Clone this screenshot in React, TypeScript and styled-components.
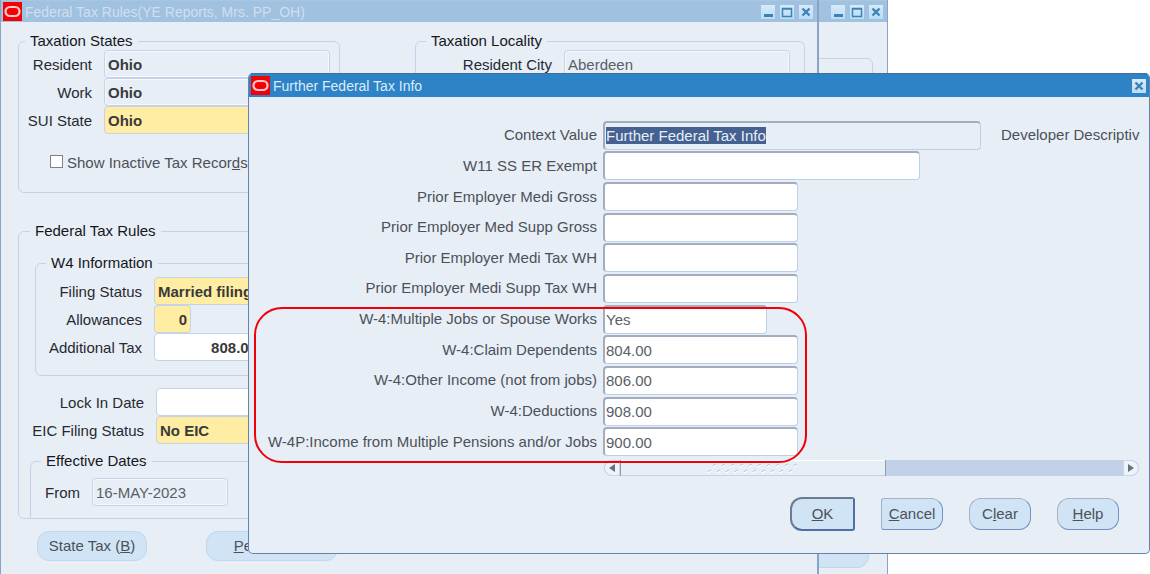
import React, { useEffect, useRef } from "react";
import styled, { createGlobalStyle, css } from "styled-components";

const GlobalStyle = createGlobalStyle`
  *, *::before, *::after { box-sizing: border-box; }
  body {
    margin: 0;
    background: #ffffff;
    font-family: "Liberation Sans", Arial, sans-serif;
    font-size: 15px;
    line-height: 18px;
    color: #262a30;
  }
  button, input { font: inherit; color: inherit; }
`;

const colors = {
  canvas: "#e8eef6",
  line: "#c5d3e6",
  edge: "#8aa2c6",
  required: "#ffeda3",
  button: "#d1e4f5",
  inactiveBar: "#a0c1df",
  activeBar: "#2d83c5",
};

const Desktop = styled.main`
  position: relative;
  min-height: 100vh;
  overflow: hidden;
`;

const Window = styled.section<{ $width: number; $edge: number }>`
  position: absolute;
  top: 0;
  bottom: 0;
  left: 0;
  width: ${(p) => p.$width}px;
  display: flex;
  flex-direction: column;
  background: ${colors.canvas};
  border: solid ${colors.edge};
  border-width: 0 ${(p) => p.$edge}px 0 1px;
`;

const TitleBar = styled.header<{ $active?: boolean }>`
  display: flex;
  align-items: center;
  flex: none;
  gap: 3px;
  height: ${(p) => (p.$active ? 24 : 22)}px;
  padding: 0 ${(p) => (p.$active ? 3 : 4)}px 0 2px;
  background: ${(p) => (p.$active ? colors.activeBar : colors.inactiveBar)};
  border-top: 1px solid ${(p) => (p.$active ? "#3f6f9c" : "#a9c6e0")};
  color: ${(p) => (p.$active ? "#dcebf8" : "#cfdff0")};
`;

const Title = styled.h1`
  flex: 1;
  margin: 0;
  font-size: 14px;
  font-weight: 400;
  white-space: nowrap;
`;

const WindowControls = styled.div`
  display: flex;
  gap: 5px;
  margin-left: auto;
`;

const WindowButton = styled.button`
  display: flex;
  width: 14px;
  height: 14px;
  padding: 0;
  border: 0;
  background: linear-gradient(#d8eafa, #b9dcf4);
  color: #3b82b8;
`;

const Groups = styled.div`
  display: flex;
  flex-direction: column;
  gap: 29px;
  padding: 10px 12px 0 17px;
`;

const GroupRow = styled.div`
  display: grid;
  grid-template-columns: 322px 1fr;
  gap: 75px;
`;

const Group = styled.fieldset<{ $indent: number }>`
  min-width: 0;
  margin: 0;
  padding: 0;
  border: 1px solid ${colors.line};
  border-radius: 6px;

  > legend {
    margin-left: ${(p) => p.$indent}px;
    padding: 0 5px;
    color: #14171c;
  }
`;

const RulesGroup = styled(Group)`
  padding: 14px 12px 0 11px;
`;

const W4Group = styled(Group)`
  margin-left: 5px;
  padding: 5px 0 14px;
`;

const DatesGroup = styled(Group)`
  margin-top: 8px;
  padding: 8px 0 12px;
  border-bottom: 0;
  border-radius: 6px 6px 0 0;
`;

const FieldGrid = styled.div<{ $label: number }>`
  display: grid;
  grid-template-columns: ${(p) => p.$label}px 1fr;
  grid-auto-rows: 28px;
  column-gap: 12px;
  align-items: center;

  > label {
    padding-top: 2px;
    text-align: right;
    white-space: nowrap;
  }
`;

const Field = styled.input<{ $width: number; $tone?: "plain" | "required" | "locked"; $bold?: boolean; $right?: boolean }>`
  width: ${(p) => p.$width}px;
  height: 28px;
  padding: 0 3px;
  border: 1px solid ${colors.line};
  border-radius: 4px;
  outline: 0;
  background: ${(p) =>
    p.$tone === "required" ? colors.required : p.$tone === "locked" ? colors.canvas : "#ffffff"};
  box-shadow: ${(p) => (p.$tone === "locked" ? "inset 0 0 0 1px #f5f8fc" : "none")};
  color: ${(p) => (p.$bold ? "#3b3a3a" : "#5a5e66")};
  font-weight: ${(p) => (p.$bold ? 700 : 400)};
  text-align: ${(p) => (p.$right ? "right" : "left")};
`;

const CheckLabel = styled.label`
  display: flex;
  align-items: center;
  gap: 4px;
  height: 24px;
  margin: 17px 0 17px 31px;
  color: #4c5159;
  white-space: nowrap;

  input {
    appearance: none;
    width: 13px;
    height: 13px;
    margin: 0 0 4px;
    border: 1px solid #7d828c;
    background: #ffffff;
  }
`;

const RuleDates = styled.div`
  padding-top: 12px;
`;

const ButtonBar = styled.div`
  display: flex;
  gap: 59px;
  padding: 12px 19px;
  margin-left: 17px;
`;

const SoftButton = styled.button<{ $width: number }>`
  width: ${(p) => p.$width}px;
  height: 30px;
  padding: 0;
  border: 1px solid #bfd6ec;
  border-radius: 12px;
  background: ${colors.button};
  color: #4c5159;
`;

const BackBody = styled.div`
  flex: 1;
  display: flex;
  flex-direction: column;
  gap: 20px;
  padding: 36px 14px 6px 17px;
`;

const BackPanel = styled.div`
  flex: 1;
  border: 1px solid ${colors.line};
  border-radius: 6px;
`;

const BackActions = styled.div`
  display: flex;
  justify-content: flex-end;
  padding-right: 4px;
`;

const Dialog = styled.section`
  position: absolute;
  top: 73px;
  left: 248px;
  right: 0;
  display: flex;
  flex-direction: column;
  overflow: hidden;
  background: ${colors.canvas};
  border: 1px solid #6583ac;
  border-top: 0;
  border-radius: 5px;
`;

const DialogForm = styled.form`
  display: flex;
  flex-direction: column;
  padding: 23px 10px 22px 0;
`;

const Segments = styled.div`
  position: relative;
  display: grid;
  grid-template-rows: repeat(11, 1fr);
  min-height: 337px;
`;

const SegmentRow = styled.div`
  display: grid;
  grid-template-columns: 348px 1fr;
  column-gap: 6px;
  align-items: center;
  white-space: nowrap;
  color: #4c5159;

  > label { text-align: right; }
`;

const SegmentField = styled(Field)`
  height: 29px;
  padding: 0 1px;
  border-color: #a3adbd #bcd0e8 #bcd0e8 #a3adbd;
  border-width: 2px 1px 1px 2px;
  box-shadow: none;

  &::selection {
    background: #45618f;
    color: #e6eefa;
  }
`;

const ContextValue = styled.div`
  display: flex;
  align-items: center;
  gap: 20px;
`;

const Highlight = styled.div`
  position: absolute;
  top: 187px;
  left: 5px;
  width: 553px;
  height: 156px;
  border: 2px solid #f00008;
  border-radius: 28px;
  pointer-events: none;
`;

const ScrollBar = styled.div`
  display: grid;
  grid-template-columns: 16px 266px 1fr 16px;
  height: 16px;
  margin: 3px 0 0 355px;
  background: #c0d1e8;
  border-radius: 8px;
`;

const ScrollArrow = styled.button<{ $end?: boolean }>`
  display: flex;
  align-items: center;
  justify-content: center;
  padding: 0;
  border: 1px solid #cbd6e4;
  border-radius: ${(p) => (p.$end ? "0 8px 8px 0" : "8px 0 0 8px")};
  background: #eef3f9;
  color: #66707e;
`;

const Thumb = styled.div`
  display: flex;
  align-items: center;
  justify-content: center;
  border: solid #8d9cb3;
  border-width: 0 1px;
  background: ${colors.canvas};
  box-shadow: inset 0 1px 0 #ffffff, inset 0 -1px 0 #c5d3e6;
`;

const DialogActions = styled.div`
  display: flex;
  justify-content: flex-end;
  align-items: center;
  gap: 26px;
  height: 34px;
  margin: 21px 20px 0 0;
`;

const ActionButton = styled.button<{ $shape?: "default" | "left-square" }>`
  width: 62px;
  height: 32px;
  padding: 0;
  border: 1px solid;
  border-color: #a3b2c6 #7290bd #7290bd #a3b2c6;
  border-radius: ${(p) => (p.$shape === "left-square" ? "3px 12px 12px 3px" : "12px")};
  background: ${colors.button};
  color: #4c5159;

  ${(p) =>
    p.$shape === "default" &&
    css`
      width: 65px;
      height: 34px;
      border: 2px solid;
      border-color: #6a7b94 #4d6fa3 #4d6fa3 #6a7b94;
      border-radius: 12px 3px 3px 12px;
    `}
`;

const Logo = () => (
  <svg width="19" height="19" viewBox="0 0 19 19" aria-hidden="true">
    <rect width="19" height="19" fill="#f60008" />
    <rect x="2.5" y="5" width="14" height="9" rx="4.5" fill="none" stroke="#ffc9c9" strokeWidth="2.2" />
  </svg>
);

const glyphs = {
  Minimize: <path d="M3 10.5h9" strokeWidth="3" />,
  Maximize: <path d="M2.5 3.5h9v8h-9zM2.5 4h9" strokeWidth="1.5" />,
  Close: <path d="M3.5 3.5l7 7M10.5 3.5l-7 7" strokeWidth="2.4" />,
};

const Controls = ({ names }: { names: (keyof typeof glyphs)[] }) => (
  <WindowControls>
    {names.map((name) => (
      <WindowButton key={name} type="button" aria-label={name}>
        <svg width="14" height="14" viewBox="0 0 14 14" fill="none" stroke="currentColor">
          {glyphs[name]}
        </svg>
      </WindowButton>
    ))}
  </WindowControls>
);

const Grip = () => (
  <svg width="92" height="12" viewBox="0 0 92 12" fill="none" strokeWidth="1.4" aria-hidden="true">
    {Array.from({ length: 10 }, (_, i) => (
      <g key={i}>
        <path d={`M${i * 9 + 6} 4l3-2M${i * 9 + 1} 10l3-2`} stroke="#b0bccc" />
        <path d={`M${i * 9 + 6} 5l3-2M${i * 9 + 1} 11l3-2`} stroke="#ffffff" />
      </g>
    ))}
  </svg>
);

const segments = [
  { id: "w11", label: "W11 SS ER Exempt", value: "", width: 317 },
  { id: "medi-gross", label: "Prior Employer Medi Gross", value: "", width: 195 },
  { id: "supp-gross", label: "Prior Employer Med Supp Gross", value: "", width: 195 },
  { id: "medi-wh", label: "Prior Employer Medi Tax WH", value: "", width: 195 },
  { id: "supp-wh", label: "Prior Employer Medi Supp Tax WH", value: "", width: 195 },
  { id: "jobs", label: "W-4:Multiple Jobs or Spouse Works", value: "Yes", width: 164 },
  { id: "dependents", label: "W-4:Claim Dependents", value: "804.00", width: 195 },
  { id: "other", label: "W-4:Other Income (not from jobs)", value: "806.00", width: 195 },
  { id: "deductions", label: "W-4:Deductions", value: "908.00", width: 195 },
  { id: "pensions", label: "W-4P:Income from Multiple Pensions and/or Jobs", value: "900.00", width: 195 },
];

const FurtherInfoDialog = () => {
  const context = useRef<HTMLInputElement>(null);

  useEffect(() => {
    context.current?.focus();
    context.current?.select();
  }, []);

  return (
    <Dialog role="dialog" aria-label="Further Federal Tax Info">
      <TitleBar $active>
        <Logo />
        <Title>Further Federal Tax Info</Title>
        <Controls names={["Close"]} />
      </TitleBar>
      <DialogForm onSubmit={(e) => e.preventDefault()}>
        <Segments>
          <SegmentRow>
            <label htmlFor="context">Context Value</label>
            <ContextValue>
              <SegmentField ref={context} id="context" $width={378} $tone="locked" readOnly defaultValue="Further Federal Tax Info" />
              <span>Developer Descriptiv</span>
            </ContextValue>
          </SegmentRow>
          {segments.map((s) => (
            <SegmentRow key={s.id}>
              <label htmlFor={s.id}>{s.label}</label>
              <SegmentField id={s.id} $width={s.width} defaultValue={s.value} />
            </SegmentRow>
          ))}
          <Highlight />
        </Segments>
        <ScrollBar>
          <ScrollArrow type="button" aria-label="Scroll left">
            <svg width="6" height="8" viewBox="0 0 6 8"><path d="M6 0v8L0 4z" fill="currentColor" /></svg>
          </ScrollArrow>
          <Thumb><Grip /></Thumb>
          <span />
          <ScrollArrow type="button" aria-label="Scroll right" $end>
            <svg width="6" height="8" viewBox="0 0 6 8"><path d="M0 0v8l6-4z" fill="currentColor" /></svg>
          </ScrollArrow>
        </ScrollBar>
        <DialogActions>
          <ActionButton $shape="default"><u>O</u>K</ActionButton>
          <ActionButton type="button" $shape="left-square"><u>C</u>ancel</ActionButton>
          <ActionButton type="button">C<u>l</u>ear</ActionButton>
          <ActionButton type="button"><u>H</u>elp</ActionButton>
        </DialogActions>
      </DialogForm>
    </Dialog>
  );
};

export default function App() {
  return (
    <Desktop>
      <GlobalStyle />

      <Window $width={888} $edge={1}>
        <TitleBar>
          <Controls names={["Minimize", "Maximize", "Close"]} />
        </TitleBar>
        <BackBody>
          <BackPanel />
          <BackActions>
            <SoftButton $width={110} type="button" aria-label="Close form" />
          </BackActions>
        </BackBody>
      </Window>

      <Window $width={819} $edge={2}>
        <TitleBar>
          <Logo />
          <Title>Federal Tax Rules(YE Reports, Mrs. PP_OH)</Title>
          <Controls names={["Minimize", "Maximize", "Close"]} />
        </TitleBar>
        <Groups>
          <GroupRow>
            <Group $indent={6}>
              <legend>Taxation States</legend>
              <FieldGrid $label={73}>
                <label htmlFor="resident">Resident</label>
                <Field id="resident" $width={226} $tone="locked" $bold readOnly defaultValue="Ohio" />
                <label htmlFor="work">Work</label>
                <Field id="work" $width={226} $tone="locked" $bold readOnly defaultValue="Ohio" />
                <label htmlFor="sui">SUI State</label>
                <Field id="sui" $width={226} $tone="required" $bold defaultValue="Ohio" />
              </FieldGrid>
              <CheckLabel>
                <input type="checkbox" />
                <span>Show Inactive Tax Recor<u>d</u>s</span>
              </CheckLabel>
            </Group>
            <Group $indent={10}>
              <legend>Taxation Locality</legend>
              <FieldGrid $label={136}>
                <label htmlFor="city">Resident City</label>
                <Field id="city" $width={226} $tone="locked" readOnly defaultValue="Aberdeen" />
              </FieldGrid>
            </Group>
          </GroupRow>

          <RulesGroup $indent={0}>
            <legend>Federal Tax Rules</legend>
            <W4Group $indent={10}>
              <legend>W4 Information</legend>
              <FieldGrid $label={106}>
                <label htmlFor="filing">Filing Status</label>
                <Field id="filing" $width={220} $tone="required" $bold defaultValue="Married filing jointly" />
                <label htmlFor="allowances">Allowances</label>
                <Field id="allowances" $width={37} $tone="required" $bold $right defaultValue="0" />
                <label htmlFor="additional">Additional Tax</label>
                <Field id="additional" $width={107} $bold $right defaultValue="808.00" />
              </FieldGrid>
            </W4Group>
            <RuleDates>
              <FieldGrid $label={114}>
                <label htmlFor="lock">Lock In Date</label>
                <Field id="lock" $width={136} defaultValue="" />
                <label htmlFor="eic">EIC Filing Status</label>
                <Field id="eic" $width={220} $tone="required" $bold defaultValue="No EIC" />
              </FieldGrid>
            </RuleDates>
            <DatesGroup $indent={10}>
              <legend>Effective Dates</legend>
              <FieldGrid $label={49}>
                <label htmlFor="from">From</label>
                <Field id="from" $width={136} $tone="locked" readOnly defaultValue="16-MAY-2023" />
              </FieldGrid>
            </DatesGroup>
          </RulesGroup>
        </Groups>
        <ButtonBar>
          <SoftButton $width={110} type="button">State Tax (<u>B</u>)</SoftButton>
          <SoftButton $width={132} type="button"><u>P</u>ercentage</SoftButton>
        </ButtonBar>
      </Window>

      <FurtherInfoDialog />
    </Desktop>
  );
}
